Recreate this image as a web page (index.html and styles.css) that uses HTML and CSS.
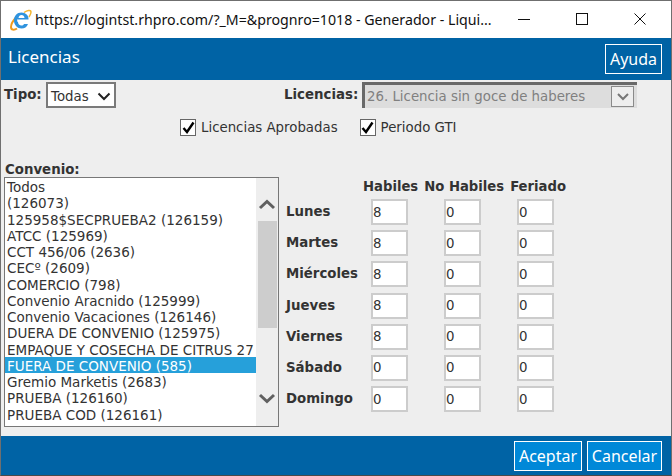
FILE: index.html
```html
<!DOCTYPE html>
<html lang="es">
<head>
    <meta charset="UTF-8">
    <meta name="viewport" content="width=device-width, initial-scale=1.0">
    <title>Licencias</title>
    <link rel="stylesheet" href="styles.css">
</head>
<body>
    <div class="window">
        <div class="titlebar">
            <svg class="ie-icon" width="22" height="22" viewBox="0 0 22 22">
                <path d="M14 3.500C17 1.500 21 .5 21 3c0 1.500-1 3.500-2 5" fill="none" stroke="#f2b632" stroke-width="1.500"/>
                <path d="M7 19.500C4 21.500 1 21 1 18c0-3 2.500-7 6-10.500" fill="none" stroke="#f09a1d" stroke-width="2"/>
                <path d="M7 10.500h11.500c.5-4-3-7-7-7-4.500 0-7.500 3.500-7.500 8 0 4.500 3.500 8 7.500 8 3 0 5.500-1.500 6.500-4.500h-4c-.5 1-1.500 1.500-2.500 1.500-2 0-3.500-1.500-3.500-3.500h-.5zM8.500 9c.2-1.800 1.500-3 3-3s3 1.200 3 3z" fill="#2f93de" fill-rule="evenodd"/>
            </svg>
            <span class="window-title">https://logintst.rhpro.com/?_M=&amp;prognro=1018 - Generador - Liqui...</span>
            <div class="window-controls">
                <svg width="14" height="14" viewBox="0 0 14 14"><path d="M1 7.500h12" stroke="#111" fill="none"/></svg>
                <svg width="14" height="14" viewBox="0 0 14 14"><rect x="1.500" y="1.500" width="11" height="11" stroke="#111" fill="none"/></svg>
                <svg width="14" height="14" viewBox="0 0 14 14"><path d="M1.500 1.500l11 11M12.500 1.500l-11 11" stroke="#111" fill="none"/></svg>
            </div>
        </div>

        <header class="header">
            <h1>Licencias</h1>
            <button class="btn-help">Ayuda</button>
        </header>

        <main class="content">
            <div class="filters">
                <div class="filter-tipo">
                    <label>Tipo:</label>
                    <div class="select-tipo">
                        <span>Todas</span>
                        <svg width="14" height="9" viewBox="0 0 14 9"><path d="M1.500 1.500L7 7l5.500-5.500" fill="none" stroke="#222" stroke-width="2"/></svg>
                    </div>
                </div>
                <div class="filter-licencias">
                    <label>Licencias:</label>
                    <div class="select-licencias">
                        <span>26. Licencia sin goce de haberes</span>
                        <div class="select-arrow">
                            <svg width="12" height="8" viewBox="0 0 12 8"><path d="M1 1l5 5 5-5" fill="none" stroke="#777" stroke-width="2"/></svg>
                        </div>
                    </div>
                </div>
            </div>

            <div class="checks">
                <div class="check">
                    <span class="checkbox"><svg width="13" height="13" viewBox="0 0 13 13"><path d="M1.500 7l3.500 4 6.500-9.500" fill="none" stroke="#000" stroke-width="2.400"/></svg></span>
                    Licencias Aprobadas
                </div>
                <div class="check">
                    <span class="checkbox"><svg width="13" height="13" viewBox="0 0 13 13"><path d="M1.500 7l3.500 4 6.500-9.500" fill="none" stroke="#000" stroke-width="2.400"/></svg></span>
                    Periodo GTI
                </div>
            </div>

            <div class="columns">
                <section class="convenio">
                    <label>Convenio:</label>
                    <div class="listbox">
                        <ul class="options">
                            <li>Todos</li>
                            <li>(126073)</li>
                            <li>125958$SECPRUEBA2 (126159)</li>
                            <li>ATCC (125969)</li>
                            <li>CCT 456/06 (2636)</li>
                            <li>CECº (2609)</li>
                            <li>COMERCIO (798)</li>
                            <li>Convenio Aracnido (125999)</li>
                            <li>Convenio Vacaciones (126146)</li>
                            <li>DUERA DE CONVENIO (125975)</li>
                            <li>EMPAQUE Y COSECHA DE CITRUS 27</li>
                            <li class="selected">FUERA DE CONVENIO (585)</li>
                            <li>Gremio Marketis (2683)</li>
                            <li>PRUEBA (126160)</li>
                            <li>PRUEBA COD (126161)</li>
                        </ul>
                        <div class="scrollbar">
                            <svg width="18" height="11" viewBox="0 0 18 11"><path d="M2 9l7-6.500L16 9" fill="none" stroke="#606060" stroke-width="3"/></svg>
                            <div class="thumb"></div>
                            <svg width="18" height="11" viewBox="0 0 18 11"><path d="M2 2l7 6.500L16 2" fill="none" stroke="#606060" stroke-width="3"/></svg>
                        </div>
                    </div>
                </section>

                <section class="hours">
                    <div class="hours-head"><b>Habiles</b><b>No Habiles</b><b>Feriado</b></div>
                    <b class="day">Lunes</b><input value="8"><input value="0"><input value="0">
                    <b class="day">Martes</b><input value="8"><input value="0"><input value="0">
                    <b class="day">Miércoles</b><input value="8"><input value="0"><input value="0">
                    <b class="day">Jueves</b><input value="8"><input value="0"><input value="0">
                    <b class="day">Viernes</b><input value="8"><input value="0"><input value="0">
                    <b class="day">Sábado</b><input value="0"><input value="0"><input value="0">
                    <b class="day">Domingo</b><input value="0"><input value="0"><input value="0">
                </section>
            </div>
        </main>

        <footer class="footer">
            <button class="btn-action">Aceptar</button>
            <button class="btn-action">Cancelar</button>
        </footer>
    </div>
</body>
</html>
```
FILE: styles.css
```css
* {
    margin: 0;
    padding: 0;
    box-sizing: border-box;
}
html, body {
    height: 100%;
    overflow: hidden;
}
body {
    font-family: 'DejaVu Sans', sans-serif;
    font-size: 13.33px;
    color: #333;
}
.window {
    width: 672px;
    height: 476px;
    display: flex;
    flex-direction: column;
    border: 1px solid #6f6f6f;
    border-bottom-color: #4a4a4a;
}
.titlebar {
    height: 37px;
    background: #fff;
    display: flex;
    align-items: center;
    padding-left: 9px;
}
.ie-icon {
    margin-right: 3px;
}
.window-title {
    font-family: 'Noto Sans', sans-serif;
    font-size: 14.2px;
    color: #111;
    white-space: nowrap;
    width: 458px;
}
.window-controls {
    display: flex;
    gap: 44px;
    margin-left: 24px;
    margin-top: -2px;
}
.header {
    height: 42px;
    background: #0063a5;
    display: flex;
    align-items: center;
    justify-content: space-between;
    padding: 0 9px 0 7px;
    color: #fff;
}
.header h1 {
    font-family: 'Noto Sans', sans-serif;
    font-size: 17px;
    font-weight: normal;
    margin-top: -6px;
}
.btn-help {
    width: 57px;
    height: 30px;
    background: #0063a5;
    border: 1px solid #fff;
    color: #fff;
    font-family: 'Noto Sans', sans-serif;
    font-size: 16px;
}
.content {
    flex: 1;
    background: #eee;
    padding: 2px 3px 0;
}
.filters {
    display: flex;
    height: 26px;
}
.filters label, .convenio label {
    font-weight: bold;
}
.filter-tipo, .filter-licencias {
    display: flex;
    align-items: center;
}
.filter-tipo label {
    width: 42px;
    margin-top: -2px;
}
.select-tipo {
    width: 70px;
    height: 26px;
    background: #fff;
    border: 2px solid #7a7a7a;
    display: flex;
    align-items: center;
    justify-content: space-between;
    padding: 2px 3px 0 3px;
}
.filter-licencias {
    margin-left: 168px;
}
.filter-licencias label {
    width: 78px;
    margin-top: -2px;
}
.select-licencias {
    width: 275px;
    height: 26px;
    background: #ddd;
    border-top: 3px solid #696969;
    border-left: 3px solid #696969;
    color: #808080;
    display: flex;
    align-items: center;
    justify-content: space-between;
    padding-left: 2px;
}
.select-arrow {
    width: 23px;
    height: 21px;
    margin-right: 3px;
    border: 1px solid #8a8a8a;
    background: #eee;
    display: flex;
    align-items: center;
    justify-content: center;
}
.checks {
    display: flex;
    margin: 10px 0 0 176px;
    height: 18px;
    align-items: center;
}
.check {
    display: flex;
    align-items: center;
    gap: 5px;
    margin-right: 22px;
}
.checkbox {
    width: 16px;
    height: 17px;
    background: #fff;
    border: 1px solid #666;
    display: flex;
    align-items: center;
    justify-content: center;
}
.columns {
    display: flex;
    margin-top: 24px;
}
.convenio {
    width: 282px;
}
.convenio label {
    display: block;
    height: 18px;
    padding: 1px 0 0 1px;
    line-height: 17px;
}
.listbox {
    width: 275px;
    height: 250px;
    margin-top: -1px;
    border: 1px solid #777;
    background: #fff;
    display: flex;
    overflow: hidden;
}
.options {
    list-style: none;
    width: 251px;
    flex: none;
    font-size: 13.5px;
}
.options li {
    height: 16.25px;
    line-height: 18px;
    padding-left: 2px;
    white-space: nowrap;
    overflow: hidden;
}
.options .selected {
    background: #26a0da;
    color: #fff;
}
.scrollbar {
    flex: 1;
    background: #eee;
    display: flex;
    flex-direction: column;
    align-items: center;
    padding-top: 21px;
}
.thumb {
    width: 19px;
    height: 107px;
    background: #cdcdcd;
    margin: 11px 0 65px;
}
.hours {
    display: grid;
    grid-template-columns: 85px 73px 73px 70px;
    grid-template-rows: 20px repeat(7, 31.2px);
    margin-top: 19px;
    align-items: start;
}
.hours-head {
    grid-column: 1 / -1;
    display: flex;
    gap: 6px;
    padding-left: 77px;
    font-size: 13.2px;
}
.hours b {
    white-space: nowrap;
}
.hours .day {
    line-height: 26px;
}
.hours input {
    width: 37px;
    height: 26px;
    border: 2px solid #ccc;
    background: #fff;
    padding-left: 0;
    font-family: 'DejaVu Sans', sans-serif;
    font-size: 13.33px;
    color: #333;
    outline: none;
}
.footer {
    height: 39px;
    background: #0063a5;
    display: flex;
    justify-content: flex-end;
    align-items: center;
    gap: 5px;
    padding: 0 9px 0 0;
}
.btn-action {
    height: 30px;
    background: #0088d8;
    border: 1px solid #fff;
    color: #fff;
    font-family: 'Noto Sans', sans-serif;
    font-size: 16px;
    width: 68px;
}
.btn-action:last-child {
    width: 75px;
}
```
